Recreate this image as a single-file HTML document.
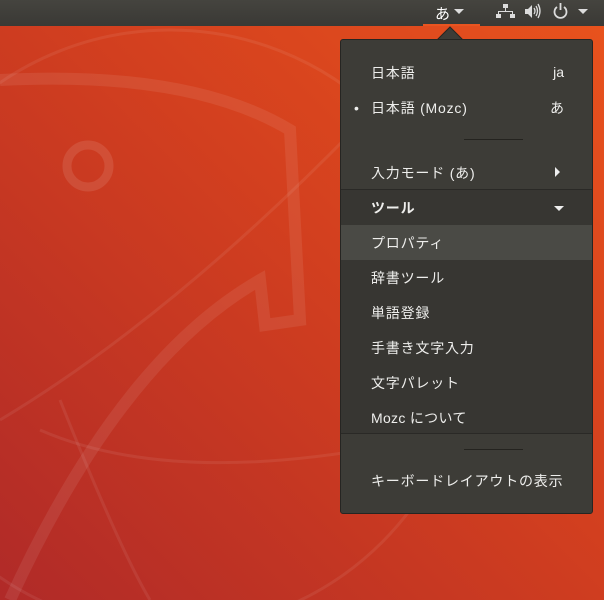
<!DOCTYPE html>
<html><head><meta charset="utf-8"><style>
*{margin:0;padding:0;box-sizing:border-box}
body{width:604px;height:600px;overflow:hidden;position:relative;font-family:"Liberation Sans","Noto Sans CJK JP",sans-serif;background:linear-gradient(225deg,#e9531d 0%,#d23f1f 45%,#b02a28 100%)}
.bar{position:absolute;left:0;top:0;width:604px;height:26px;background:linear-gradient(#45443f,#3a3935);}
.ul{position:absolute;left:423px;top:24px;width:57px;height:2px;background:#e95420}
.menu{position:absolute;left:340px;top:39px;width:253px;height:475px;background:#3d3c37;border:1px solid #262522;border-radius:3px}
.sub{position:absolute;left:0;top:149px;width:251px;height:245px;background:#373632;border-top:1px solid #2a2926;border-bottom:1px solid #2a2926}
.hl{position:absolute;left:0;top:185px;width:251px;height:35px;background:#4a4a45}
.t{position:absolute;left:30px;color:#eeeeec;font-size:14px;line-height:18px;white-space:nowrap;letter-spacing:0.8px}
.r{position:absolute;right:28px;color:#eeeeec;font-size:14px;line-height:18px}
.sep{position:absolute;left:123px;width:59px;height:1px;background:#24231f}
.fg{color:#dcdcdc;position:absolute}
</style></head><body>
<svg width="604" height="600" style="position:absolute;left:0;top:0" fill="none" stroke="rgba(255,255,255,0.07)">
<circle cx="88" cy="166" r="21" stroke-width="9" stroke="rgba(255,255,255,0.10)"/>
<path d="M0 80 Q190 70 290 130 L300 320 L265 325 L260 280 Q120 360 10 600" stroke-width="12" stroke="rgba(255,255,255,0.08)"/>
<circle cx="170" cy="330" r="300" stroke-width="3"/>
<path d="M0 420 Q200 300 420 60" stroke-width="3"/>
<path d="M40 430 Q200 500 500 420" stroke-width="3"/>
<path d="M60 400 Q120 550 150 600" stroke-width="3"/>
</svg>
<div class="bar"></div>
<div class="fg" style="left:435px;top:3px;font-size:15px;color:#fff">あ</div>
<svg width="604" height="26" style="position:absolute;left:0;top:0" fill="#dcdcdc">
<path d="M454 9h10l-5 5z"/>
<rect x="503" y="4" width="5" height="4"/><rect x="505" y="8" width="1" height="3"/><rect x="498" y="11" width="15" height="1"/><rect x="498" y="11" width="1" height="3"/><rect x="512" y="11" width="1" height="3"/><rect x="496" y="14" width="5" height="4"/><rect x="510" y="14" width="5" height="4"/>
<path d="M525 9h3l4-4v13l-4-4h-3z"/>
<path d="M534 8q2 3 0 6M536 6q3 5 0 10M538 4q4 7 0 14" stroke="#dcdcdc" stroke-width="1.3" fill="none"/>
<path d="M557 7a6 6 0 1 0 7 0" stroke="#dcdcdc" stroke-width="1.8" fill="none"/><rect x="559.6" y="3" width="1.8" height="7"/>
<path d="M578 9h10l-5 5z"/>
</svg>
<div class="ul"></div>
<svg width="30" height="14" style="position:absolute;left:437px;top:26px"><path d="M0 14 L13 1 L26 14Z" fill="#3d3c37"/><path d="M0 14 L13 1 L26 14" stroke="#262522" fill="none"/></svg>
<div class="menu">
<div class="sub"></div>
<div class="hl"></div>
<div class="t" style="top:24px">日本語</div><div class="r" style="top:23px">ja</div>
<div class="t" style="left:13px;top:59px">•</div>
<div class="t" style="top:59px">日本語 (Mozc)</div><div class="r" style="top:59px">あ</div>
<div class="sep" style="top:99px"></div>
<div class="t" style="top:124px">入力モード (あ)</div>
<div style="position:absolute;left:214px;top:127px;border-left:5px solid #eee;border-top:5px solid transparent;border-bottom:5px solid transparent"></div>
<div class="t" style="top:159px;font-weight:bold">ツール</div>
<div style="position:absolute;left:213px;top:166px;border-top:5px solid #eee;border-left:5px solid transparent;border-right:5px solid transparent"></div>
<div class="t" style="top:194px">プロパティ</div>
<div class="t" style="top:229px">辞書ツール</div>
<div class="t" style="top:264px">単語登録</div>
<div class="t" style="top:299px">手書き文字入力</div>
<div class="t" style="top:334px">文字パレット</div>
<div class="t" style="top:369px;letter-spacing:0.3px">Mozc について</div>
<div class="sep" style="top:409px"></div>
<div class="t" style="top:432px">キーボードレイアウトの表示</div>
</div>
</body></html>
